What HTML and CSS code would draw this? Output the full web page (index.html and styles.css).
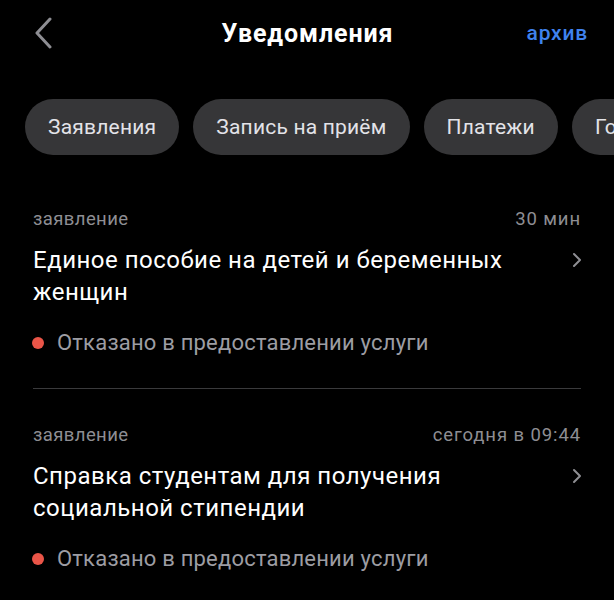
FILE: index.html
```html
<!DOCTYPE html>
<html lang="ru">
<head>
    <meta charset="UTF-8">
    <meta name="viewport" content="width=device-width, initial-scale=1.0">
    <title>Уведомления</title>
    <link rel="stylesheet" href="styles.css">
</head>
<body>
    <header class="top-bar">
        <a class="back" href="#">
            <svg width="20" height="32" viewBox="0 0 20 32"><path d="M17 2 L4 16 L17 30" fill="none" stroke="#8e8e93" stroke-width="3" stroke-linecap="round" stroke-linejoin="round"/></svg>
        </a>
        <h1>Уведомления</h1>
        <a class="archive" href="#">архив</a>
    </header>

    <nav class="chips">
        <span class="chip">Заявления</span>
        <span class="chip">Запись на приём</span>
        <span class="chip">Платежи</span>
        <span class="chip">Госпочта</span>
    </nav>

    <div class="list">
        <div class="item">
            <div class="meta">
                <span>заявление</span>
                <span class="time">30 мин</span>
            </div>
            <div class="title-row">
                <p class="title">Единое пособие на детей и беременных женщин</p>
                <svg class="arrow" width="12" height="18" viewBox="0 0 12 18"><path d="M3 3 L9 9 L3 15" fill="none" stroke="#8e8e93" stroke-width="2" stroke-linecap="round" stroke-linejoin="round"/></svg>
            </div>
            <p class="status"><span class="dot"></span>Отказано в предоставлении услуги</p>
        </div>
        <div class="item">
            <div class="meta">
                <span>заявление</span>
                <span class="time">сегодня в 09:44</span>
            </div>
            <div class="title-row">
                <p class="title">Справка студентам для получения социальной стипендии</p>
                <svg class="arrow" width="12" height="18" viewBox="0 0 12 18"><path d="M3 3 L9 9 L3 15" fill="none" stroke="#8e8e93" stroke-width="2" stroke-linecap="round" stroke-linejoin="round"/></svg>
            </div>
            <p class="status"><span class="dot"></span>Отказано в предоставлении услуги</p>
        </div>
    </div>
</body>
</html>
```
FILE: styles.css
```css
body { margin: 0; background-color: #000; color: #fff; font-family: Roboto, "Noto Sans", sans-serif; overflow: hidden; }

.top-bar { display: flex; align-items: center; justify-content: space-between; height: 66px; padding: 0 26px 0 33px; }
.back { display: flex; width: 74px; }
.top-bar h1 { margin: 0; font-size: 25px; font-weight: 700; letter-spacing: 0.9px; }
.archive { width: 80px; text-align: right; color: #3f82ee; font-size: 21px; font-weight: 500; letter-spacing: 0.8px; text-decoration: none; }

.chips { display: flex; gap: 14px; padding-left: 25px; margin-top: 33px; margin-bottom: 18px; white-space: nowrap; overflow: hidden; }
.chip { flex: none; height: 56px; line-height: 56px; padding: 0 23px; border-radius: 28px; background-color: #363638; color: #e3e3e8; font-size: 21px; letter-spacing: 0.2px; }

.list { padding: 0 33px; }
.item { padding: 36px 0 33px; border-bottom: 1px solid #3a3a3c; }
.item:last-child { border-bottom: none; }
.meta { display: flex; justify-content: space-between; line-height: 20px; font-size: 18.5px; letter-spacing: 0.4px; color: #8e8e93; }
.time { letter-spacing: 0.9px; }
.title-row { display: flex; align-items: flex-start; justify-content: space-between; margin-top: 15px; }
.title { margin: 0; max-width: 500px; font-size: 24px; line-height: 32px; letter-spacing: 0.5px; }
.arrow { flex: none; margin-top: 7px; margin-right: -2px; }
.status { display: flex; align-items: center; margin: 23px 0 0; line-height: 24px; font-size: 22px; letter-spacing: 0.2px; color: #9d9da3; }
.dot { width: 12px; height: 12px; margin: 0 13px 0 -1px; border-radius: 50%; background-color: #ea5548; }
```
